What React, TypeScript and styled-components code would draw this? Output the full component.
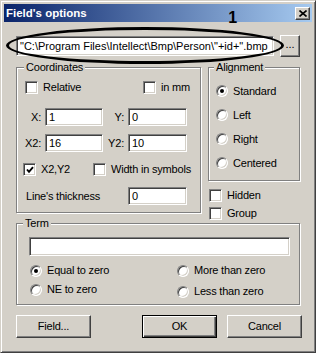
import React from 'react';
import styled, { createGlobalStyle } from 'styled-components';

const GlobalStyle = createGlobalStyle`
  html, body {
    margin: 0;
    padding: 0;
    background: #fff;
  }
  body {
    font-family: "Liberation Sans", Arial, sans-serif;
    font-size: 11px;
    line-height: 13px;
    letter-spacing: -0.2px;
    color: #000;
  }
`;

const Window = styled.div`
  position: relative;
  box-sizing: border-box;
  width: 316px;
  height: 353px;
  padding: 3px;
  background: #d4d0c8;
  border: 1px solid;
  border-color: #d4d0c8 #404040 #404040 #d4d0c8;
  box-shadow: inset 1px 1px #fff, inset -1px -1px #808080;
`;

const Caption = styled.div`
  display: flex;
  align-items: center;
  height: 18px;
  padding-left: 2px;
  background: linear-gradient(to right, #0a246a, #a6caf0);
`;

const Title = styled.span`
  color: #fff;
  font-weight: bold;
  font-size: 11.5px;
  letter-spacing: 0;
`;

const Marker = styled.span`
  align-self: flex-start;
  margin: 6px 58px 0 auto;
  font-size: 16px;
  line-height: 16px;
  font-weight: bold;
  color: #000;
`;

const Raised = styled.button<{ $default?: boolean }>`
  box-sizing: border-box;
  padding: 0;
  font: inherit;
  letter-spacing: inherit;
  color: #000;
  background: #d4d0c8;
  display: flex;
  align-items: center;
  justify-content: center;
  border: 1px solid;
  border-color: ${p => (p.$default ? '#000' : '#fff #404040 #404040 #fff')};
  box-shadow: ${p =>
    p.$default
      ? 'inset 1px 1px #fff, inset -1px -1px #404040, inset -2px -2px #808080'
      : 'inset -1px -1px #808080, inset 1px 1px #d4d0c8'};
`;

const CloseButton = styled(Raised)`
  width: 15px;
  height: 13px;
  margin-right: 2px;
`;

const Body = styled.div`
  padding: 0 12px;
`;

const PathRow = styled.div`
  display: flex;
  align-items: center;
  gap: 6px;
  margin-top: 13px;
  letter-spacing: 0;
`;

const Field = styled.div<{ $w: number; $h?: number }>`
  box-sizing: border-box;
  width: ${p => p.$w}px;
  height: ${p => p.$h ?? 18}px;
  padding: 0 3px;
  display: flex;
  align-items: center;
  white-space: nowrap;
  overflow: hidden;
  background: #fff;
  border: 1px solid;
  border-color: #808080 #fff #fff #808080;
  box-shadow: inset 1px 1px #404040, inset -1px -1px #d4d0c8;
`;

const BrowseButton = styled(Raised)`
  width: 20px;
  height: 22px;
  padding-bottom: 3px;
`;

const Oval = styled.div`
  position: absolute;
  left: 5px;
  top: 26px;
  width: 278px;
  height: 37px;
  box-sizing: border-box;
  border: 3px solid #000;
  border-radius: 50%;
  pointer-events: none;
`;

const Columns = styled.div`
  display: grid;
  grid-template-columns: 185px 92px;
  column-gap: 7px;
  align-items: start;
  margin-top: 4px;
`;

const Group = styled.fieldset`
  margin: 0;
  padding: 0;
  min-width: 0;
  border: 1px solid #808080;
  box-shadow: inset 1px 1px #fff, 1px 1px #fff;
`;

const Legend = styled.legend<{ $indent: number }>`
  margin-left: ${p => p.$indent}px;
  padding: 0 2px;
  line-height: 13px;
  background: #d4d0c8;
`;

const CoordBody = styled.div`
  display: flex;
  flex-direction: column;
  padding: 7px 0 7px 8px;
`;

const Pair = styled.div<{ $first: number; $top: number; $shift?: number }>`
  display: grid;
  grid-template-columns: ${p => p.$first}px auto;
  align-items: center;
  margin-top: ${p => p.$top}px;
  margin-left: ${p => p.$shift ?? 0}px;
`;

const XYGrid = styled.div`
  display: grid;
  grid-template-columns: 24px 58px 25px 59px;
  grid-auto-rows: 18px;
  row-gap: 8px;
  align-items: center;
  margin: 14px 0 0 -4px;
`;

const AxisLabel = styled.span`
  text-align: right;
  padding-right: 4px;
`;

const Option = styled.label<{ $h?: number }>`
  display: flex;
  align-items: center;
  gap: 5px;
  height: ${p => p.$h ?? 13}px;
  white-space: nowrap;
`;

const Box = styled.span`
  box-sizing: border-box;
  width: 13px;
  height: 13px;
  flex: none;
  display: flex;
  align-items: center;
  justify-content: center;
  background: #fff;
  border: 1px solid;
  border-color: #808080 #fff #fff #808080;
  box-shadow: inset 1px 1px #404040, inset -1px -1px #d4d0c8;
`;

const Round = styled(Box)`
  width: 12px;
  height: 12px;
  border-radius: 50%;
`;

const Dot = styled.span`
  width: 4px;
  height: 4px;
  border-radius: 50%;
  background: #000;
`;

const RightColumn = styled.div`
  display: flex;
  flex-direction: column;
  margin-bottom: -7px;
`;

const AlignBody = styled.div`
  padding: 5px 0 5px 7px;
`;

const Flags = styled.div`
  display: flex;
  flex-direction: column;
  gap: 5px;
  margin: 8px 0 0 1px;
`;

const TermGroup = styled(Group)`
  margin-top: 4px;
`;

const TermBody = styled.div`
  padding: 7px 0 3px 12px;
`;

const TermChoices = styled.div`
  display: grid;
  grid-template-columns: 147px auto;
  margin: 5px 0 0 1px;
`;

const ChoiceColumn = styled.div<{ $gap: number }>`
  display: flex;
  flex-direction: column;
  gap: ${p => p.$gap}px;
`;

const Buttons = styled.div`
  display: flex;
  gap: 10px;
  margin: 10px -2px 0 0;
`;

const PushButton = styled(Raised)`
  width: 75px;
  height: 23px;
`;

const Spacer = styled.div`
  flex: 1;
`;

const Check = ({ on }: { on?: boolean }) => (
  <Box>
    {on && (
      <svg width="8" height="8" viewBox="0 0 8 8">
        <path d="M1 3.5 L3 5.8 L7 1.2" fill="none" stroke="#000" strokeWidth="1.9" />
      </svg>
    )}
  </Box>
);

const Radio = ({ on }: { on?: boolean }) => <Round>{on && <Dot />}</Round>;

export default function App() {
  return (
    <>
      <GlobalStyle />
      <Window>
        <Caption>
          <Title>Field's options</Title>
          <Marker>1</Marker>
          <CloseButton>
            <svg width="8" height="7" viewBox="0 0 8 7">
              <path d="M0.5 0.5 L7.5 6.5 M7.5 0.5 L0.5 6.5" stroke="#000" strokeWidth="1.6" />
            </svg>
          </CloseButton>
        </Caption>
        <Body>
          <PathRow>
            <Field $w={258} $h={20}>"C:\Program Files\Intellect\Bmp\Person\"+id+".bmp</Field>
            <BrowseButton>...</BrowseButton>
          </PathRow>
          <Columns>
            <Group>
              <Legend $indent={7}>Coordinates</Legend>
              <CoordBody>
                <Pair $first={118} $top={0}>
                  <Option><Check />Relative</Option>
                  <Option><Check />in mm</Option>
                </Pair>
                <XYGrid>
                  <AxisLabel>X:</AxisLabel>
                  <Field $w={58}>1</Field>
                  <AxisLabel>Y:</AxisLabel>
                  <Field $w={59}>0</Field>
                  <AxisLabel>X2:</AxisLabel>
                  <Field $w={58}>16</Field>
                  <AxisLabel>Y2:</AxisLabel>
                  <Field $w={59}>10</Field>
                </XYGrid>
                <Pair $first={70} $top={11} $shift={-2}>
                  <Option><Check on />X2,Y2</Option>
                  <Option><Check />Width in symbols</Option>
                </Pair>
                <Pair $first={102} $top={11} $shift={1}>
                  <span>Line's thickness</span>
                  <Field $w={59}>0</Field>
                </Pair>
              </CoordBody>
            </Group>
            <RightColumn>
              <Group>
                <Legend $indent={5}>Alignment</Legend>
                <AlignBody>
                  <Option $h={24}><Radio on />Standard</Option>
                  <Option $h={24}><Radio />Left</Option>
                  <Option $h={24}><Radio />Right</Option>
                  <Option $h={24}><Radio />Centered</Option>
                </AlignBody>
              </Group>
              <Flags>
                <Option><Check />Hidden</Option>
                <Option><Check />Group</Option>
              </Flags>
            </RightColumn>
          </Columns>
          <TermGroup>
            <Legend $indent={6}>Term</Legend>
            <TermBody>
              <Field $w={261} $h={19} />
              <TermChoices>
                <ChoiceColumn $gap={0}>
                  <Option $h={19}><Radio on />Equal to zero</Option>
                  <Option $h={19}><Radio />NE to zero</Option>
                </ChoiceColumn>
                <ChoiceColumn $gap={2}>
                  <Option $h={19}><Radio />More than zero</Option>
                  <Option $h={19}><Radio />Less than zero</Option>
                </ChoiceColumn>
              </TermChoices>
            </TermBody>
          </TermGroup>
          <Buttons>
            <PushButton>Field...</PushButton>
            <Spacer />
            <PushButton $default>OK</PushButton>
            <PushButton>Cancel</PushButton>
          </Buttons>
        </Body>
        <Oval />
      </Window>
    </>
  );
}
